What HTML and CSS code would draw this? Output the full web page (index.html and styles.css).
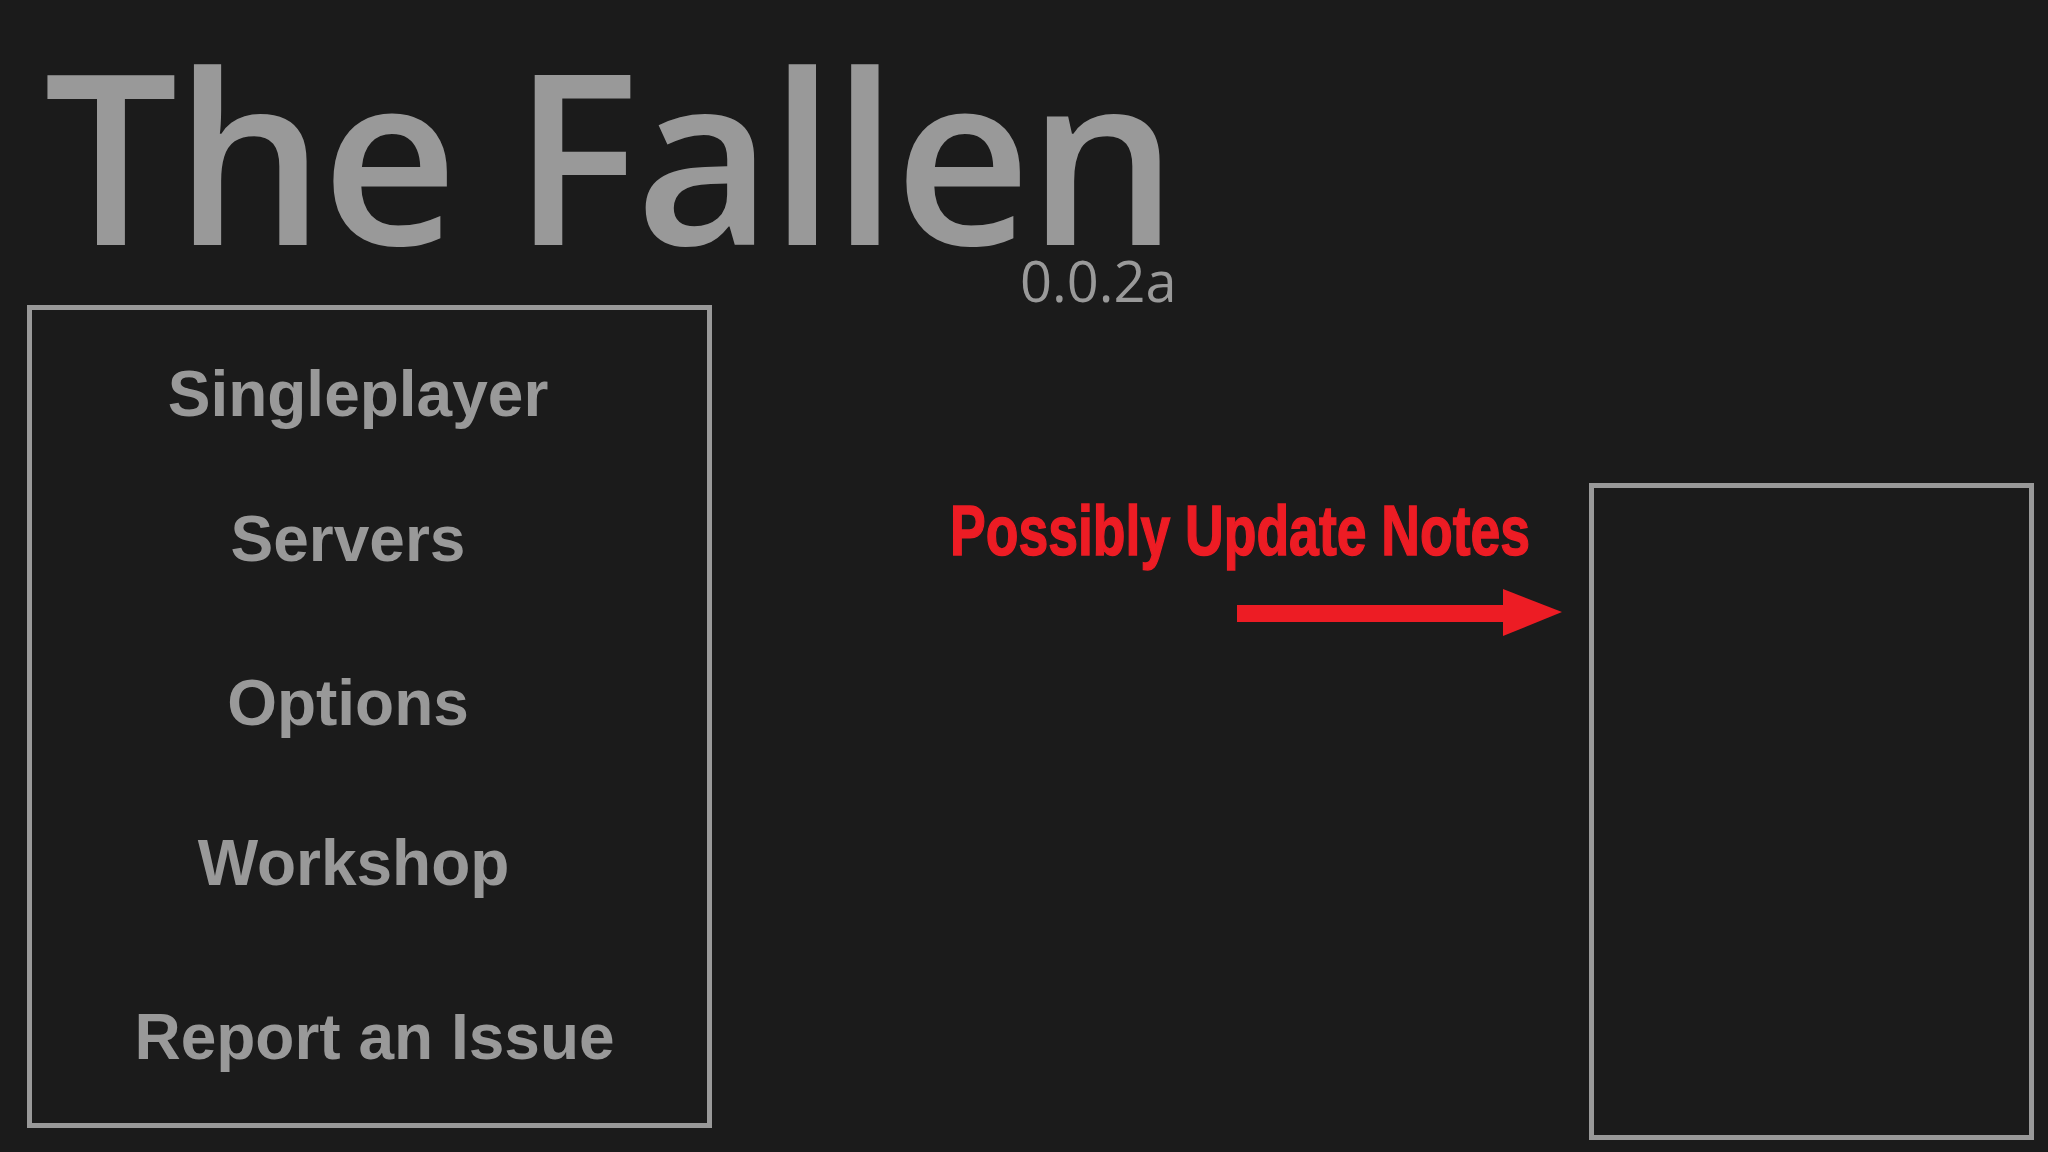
FILE: index.html
```html
<!DOCTYPE html>
<html lang="en">
<head>
<meta charset="utf-8">
<title>The Fallen</title>
<link rel="stylesheet" href="styles.css">
</head>
<body>
<div class="page">
  <header class="head">
    <div class="brand">
      <h1 class="title">The Fallen</h1>
      <div class="version">0.0.2a</div>
    </div>
  </header>
  <main class="main">
    <nav class="menu">
      <div class="item item-single">Singleplayer</div>
      <div class="item item-servers">Servers</div>
      <div class="item item-options">Options</div>
      <div class="item item-workshop">Workshop</div>
      <div class="item item-report">Report an Issue</div>
    </nav>
    <section class="note">
      <div class="note-text">Possibly Update Notes</div>
      <svg class="arrow" width="325" height="47" viewBox="0 0 325 47">
        <rect x="0" y="16" width="268" height="17" fill="#ed1c24"/>
        <polygon points="266,0 325,23 266,47" fill="#ed1c24"/>
      </svg>
    </section>
    <aside class="notes-box"></aside>
  </main>
</div>
</body>
</html>
```

FILE: styles.css
```css
html, body {
  margin: 0;
  padding: 0;
  background: #1b1b1b;
}
.page {
  width: 2048px;
  height: 1152px;
  box-sizing: border-box;
  padding: 0 14px 0 27px;
  overflow: hidden;
}
.head {
  height: 305px;
  box-sizing: border-box;
  padding-top: 53px;
}
.brand {
  display: inline-flex;
  flex-direction: column;
  margin-left: 17px;
}
.title {
  margin: 0;
  font-family: "Open Sans", sans-serif;
  font-weight: 600;
  font-size: 237px;
  line-height: 200px;
  letter-spacing: -3.5px;
  color: #999999;
  white-space: nowrap;
}
.version {
  align-self: flex-end;
  margin-top: 2px;
  margin-right: -2px;
  font-family: "Open Sans", sans-serif;
  font-weight: 400;
  font-size: 56px;
  line-height: 50px;
  color: #999999;
}
.main {
  display: flex;
  align-items: flex-start;
}
.menu {
  flex: 0 0 685px;
  width: 685px;
  height: 823px;
  box-sizing: border-box;
  border: 5px solid #999999;
  padding-top: 52px;
  display: flex;
  flex-direction: column;
}
.item {
  font-family: "Liberation Sans", Arial, sans-serif;
  font-weight: 700;
  font-size: 64px;
  line-height: 64px;
  height: 64px;
  color: #999999;
  text-align: center;
  white-space: nowrap;
}
.item-single { padding-right: 23px; }
.item-servers { margin-top: 81px; padding-right: 43px; }
.item-options { margin-top: 100px; padding-right: 43px; }
.item-workshop { margin-top: 96px; padding-right: 32px; }
.item-report { margin-top: 110px; padding-left: 10px; }
.note {
  flex: 1 1 auto;
  min-width: 0;
  padding-top: 190px;
  display: flex;
  flex-direction: column;
  align-items: flex-start;
}
.note-text {
  margin-left: 238px;
  font-family: "Liberation Sans", Arial, sans-serif;
  font-weight: 700;
  font-size: 71px;
  line-height: 71px;
  color: #ed1c24;
  -webkit-text-stroke: 1.5px #ed1c24;
  white-space: nowrap;
  transform: scaleX(0.754);
  transform-origin: left center;
}
.arrow {
  display: block;
  flex: none;
  margin-left: 525px;
  margin-top: 23px;
}
.notes-box {
  flex: 0 0 445px;
  width: 445px;
  height: 657px;
  box-sizing: border-box;
  margin-top: 178px;
  border: 5px solid #999999;
}
```
